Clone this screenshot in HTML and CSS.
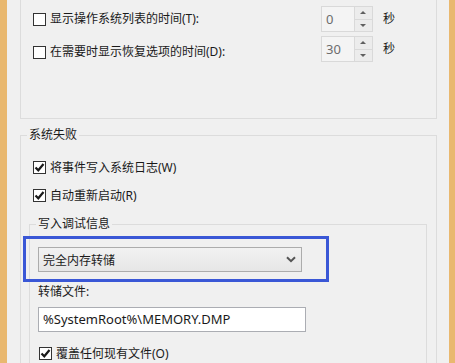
FILE: index.html
```html
<!DOCTYPE html>
<html lang="zh-CN">
<head>
    <meta charset="UTF-8">
    <title>启动和故障恢复</title>
    <link rel="stylesheet" href="styles.css">
</head>
<body>
    <div class="window">
        <div class="group-top">
            <div class="row">
                <span class="check"></span>
                <span class="label">显示操作系统列表的时间(T):</span>
                <div class="spin">
                    <span class="spin-value">0</span>
                    <span class="spin-btns">
                        <span class="spin-up"></span>
                        <span class="spin-down"></span>
                    </span>
                </div>
                <span class="unit">秒</span>
            </div>
            <div class="row">
                <span class="check check-low"></span>
                <span class="label label-low">在需要时显示恢复选项的时间(D):</span>
                <div class="spin">
                    <span class="spin-value">30</span>
                    <span class="spin-btns">
                        <span class="spin-up"></span>
                        <span class="spin-down"></span>
                    </span>
                </div>
                <span class="unit">秒</span>
            </div>
        </div>

        <fieldset class="group">
            <legend>系统失败</legend>
            <div class="opt first">
                <span class="check checked">
                    <svg width="11" height="11" viewBox="0 0 11 11"><path d="M1.5 5.5 L4.3 8.3 L9.5 2" fill="none" stroke="#1a1a1a" stroke-width="2.2"/></svg>
                </span>
                <span>将事件写入系统日志(W)</span>
            </div>
            <div class="opt">
                <span class="check checked">
                    <svg width="11" height="11" viewBox="0 0 11 11"><path d="M1.5 5.5 L4.3 8.3 L9.5 2" fill="none" stroke="#1a1a1a" stroke-width="2.2"/></svg>
                </span>
                <span>自动重新启动(R)</span>
            </div>

            <fieldset class="group inner">
                <legend>写入调试信息</legend>
                <div class="pick">
                    <div class="select">
                        <span>完全内存转储</span>
                        <svg width="10" height="7" viewBox="0 0 10 7"><path d="M1 1.2 L5 5.2 L9 1.2" fill="none" stroke="#555" stroke-width="2"/></svg>
                    </div>
                    <div class="highlight"></div>
                </div>
                <div class="field-label">转储文件:</div>
                <div class="textbox">%SystemRoot%\MEMORY.DMP</div>
                <div class="opt last">
                    <span class="check checked">
                        <svg width="11" height="11" viewBox="0 0 11 11"><path d="M1.5 5.5 L4.3 8.3 L9.5 2" fill="none" stroke="#1a1a1a" stroke-width="2.2"/></svg>
                    </span>
                    <span>覆盖任何现有文件(O)</span>
                </div>
            </fieldset>
        </fieldset>
    </div>
</body>
</html>
```

FILE: styles.css
```css
html, body {
    margin: 0;
    height: 363px;
    overflow: hidden;
}

body {
    background: #e9b86f;
    display: flex;
    font-family: "Noto Sans", "Noto Sans CJK SC", sans-serif;
    font-size: 12px;
    color: #1a1a1a;
}

.window {
    flex: 1;
    margin: 0 6px 0 7px;
    background: #f0f0f0;
    padding: 0 12px 0 13px;
}

.group-top {
    height: 112px;
    border: 1px solid #dcdcdc;
    border-top: none;
    padding: 6px 41px 0 12px;
    display: flex;
    flex-direction: column;
    gap: 4px;
}

.row {
    display: flex;
    align-items: center;
    height: 26px;
}

.label {
    flex: 1;
    margin-left: 4px;
    line-height: 16px;
}

.label-low,
.check-low {
    margin-top: 6px;
}

.check {
    width: 11px;
    height: 11px;
    border: 1px solid #333;
    background: #fff;
    display: inline-flex;
    flex-shrink: 0;
}

.spin {
    width: 50px;
    height: 24px;
    border: 1px solid #d9d9d9;
    background: #f4f4f4;
    display: flex;
}

.spin-value {
    flex: 1;
    padding: 4px 0 0 4px;
    color: #6d6d6d;
    font-size: 13px;
    line-height: 16px;
}

.spin-btns {
    width: 17px;
    display: flex;
    flex-direction: column;
    border-left: 1px solid #d9d9d9;
}

.spin-up,
.spin-down {
    flex: 1;
    background: #ececec;
    display: flex;
    justify-content: center;
    align-items: center;
}

.spin-up {
    border-bottom: 1px solid #d9d9d9;
}

.spin-up::after {
    content: "";
    border: 3px solid transparent;
    border-bottom: 3px solid #606060;
    margin-top: -3px;
}

.spin-down::after {
    content: "";
    border: 3px solid transparent;
    border-top: 3px solid #606060;
    margin-bottom: -3px;
}

.unit {
    margin-left: 10px;
    line-height: 16px;
}

.group {
    margin: 8px 0 0;
    padding: 0 9px 0 8px;
    border: 1px solid #dcdcdc;
    min-width: 0;
    height: 240px;
}

.group legend {
    padding: 0 2px;
    margin-left: -2px;
    line-height: 16px;
}

.opt {
    display: flex;
    align-items: center;
    gap: 4px;
    height: 20px;
    margin: 8px 0 0 4px;
}

.opt.first {
    margin-top: 14px;
}

.group.inner {
    margin-top: 11px;
    padding: 0 0 0 8px;
    height: 200px;
}

.opt.last {
    margin: 11px 0 0 1px;
}

.pick {
    position: relative;
    width: 264px;
    margin-top: 15px;
}

.select {
    height: 23px;
    border: 1px solid #acacac;
    background: linear-gradient(#f2f2f2, #e6e6e6);
    display: flex;
    align-items: center;
    justify-content: space-between;
    padding: 0 5px 0 4px;
}

.highlight {
    position: absolute;
    inset: -11px -27px -10px -15px;
    border: 3px solid #3a57d6;
}

.field-label {
    margin-top: 12px;
    line-height: 16px;
}

.textbox {
    width: 258px;
    height: 23px;
    margin-top: 7px;
    padding: 0 4px;
    border: 1px solid #abadb3;
    background: #fff;
    line-height: 23px;
    font-size: 13px;
}
```
